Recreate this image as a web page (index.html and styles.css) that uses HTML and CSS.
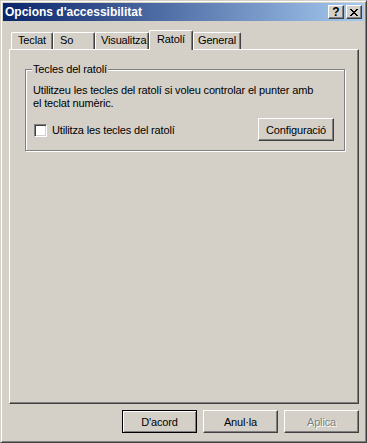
FILE: index.html
```html
<!DOCTYPE html>
<html>
<head>
<meta charset="utf-8">
<link rel="stylesheet" href="styles.css">
</head>
<body>
<div class="window">
  <div class="titlebar">
    <span class="title">Opcions d'accessibilitat</span>
    <div class="tb-buttons">
      <div class="tb-btn help">?</div>
      <div class="tb-btn close">
        <svg width="8" height="7" viewBox="0 0 8 7"><path fill="#000" d="M0 0h2v1H0z M6 0h2v1H6z M1 1h2v1H1z M5 1h2v1H5z M2 2h4v1H2z M3 3h2v1H3z M2 4h4v1H2z M1 5h2v1H1z M5 5h2v1H5z M0 6h2v1H0z M6 6h2v1H6z"/></svg>
      </div>
    </div>
  </div>
  <div class="client">
    <div class="tabs">
      <div class="tab t-teclat">Teclat</div>
      <div class="tab t-so">So</div>
      <div class="tab t-vis">Visualitza</div>
      <div class="tab t-rat selected">Ratolí</div>
      <div class="tab t-gen">General</div>
    </div>
    <div class="panel">
      <div class="group">
        <span class="group-label">Tecles del ratolí</span>
        <p class="desc">Utilitzeu les tecles del ratolí si voleu controlar el punter amb<br>el teclat numèric.</p>
        <div class="row">
          <label class="check"><span class="box"></span>Utilitza les tecles del ratolí</label>
          <div class="btn config">Configuració</div>
        </div>
      </div>
    </div>
    <div class="actions">
      <div class="btn default">D'acord</div>
      <div class="btn">Anul·la</div>
      <div class="btn disabled">Aplica</div>
    </div>
  </div>
</div>
</body>
</html>
```
FILE: styles.css
```css
* { box-sizing: border-box; }
html, body { margin: 0; padding: 0; }
body {
  width: 367px;
  height: 443px;
  font-family: "Liberation Sans", Arial, sans-serif;
  font-size: 11px;
  letter-spacing: -0.15px;
  color: #000;
  background: #D4D0C8;
}
.window {
  width: 367px;
  height: 443px;
  background: #D4D0C8;
  border: 1px solid;
  border-color: #D4D0C8 #404040 #404040 #D4D0C8;
  box-shadow: inset 1px 1px #fff, inset -1px -1px #808080;
  padding: 2px;
  display: flex;
  flex-direction: column;
}
.titlebar {
  height: 18px;
  background: linear-gradient(to right, #0A246A, #A6CAF0);
  display: flex;
  align-items: center;
  justify-content: space-between;
  padding: 0 2px 0 2px;
}
.title {
  color: #fff;
  font-weight: bold;
  font-size: 12px;
  letter-spacing: 0;
  line-height: 14px;
}
.tb-buttons {
  display: flex;
  gap: 2px;
}
.tb-btn {
  width: 16px;
  height: 14px;
  background: #D4D0C8;
  border: 1px solid;
  border-color: #fff #404040 #404040 #fff;
  box-shadow: inset -1px -1px #808080;
  display: flex;
  align-items: center;
  justify-content: center;
  font-weight: bold;
  font-size: 12px;
  line-height: 12px;
  letter-spacing: 0;
}
.tb-btn.help { padding-bottom: 1px; }
.tb-btn svg { display: block; margin-right: 1px; }
.client {
  flex: 1;
  display: flex;
  flex-direction: column;
  padding: 9px 5px 7px 6px;
}
.tabs {
  display: flex;
  align-items: flex-end;
  height: 19px;
  padding-left: 2px;
  position: relative;
  z-index: 1;
}
.tab {
  height: 17px;
  border-top: 1px solid #fff;
  border-left: 1px solid #fff;
  border-right: 1px solid #404040;
  border-radius: 2px 2px 0 0;
  box-shadow: inset -1px 0 #808080;
  padding: 1px 0 0 6px;
  line-height: 13px;
  background: #D4D0C8;
  white-space: nowrap;
}
.t-teclat { width: 42px; }
.t-so { width: 42px; }
.t-vis { width: 54px; padding-left: 5px; }
.t-rat { width: 44px; }
.t-gen { width: 48px; padding-left: 4px; }
.tab.selected {
  height: 20px;
  margin-bottom: -1px;
  padding-top: 2px;
  padding-left: 7px;
}
.panel {
  flex: 1;
  border: 1px solid;
  border-color: #fff #404040 #404040 #fff;
  box-shadow: inset -1px -1px #808080;
  padding: 19px 13px 0 15px;
}
.group {
  position: relative;
  border: 1px solid #808080;
  box-shadow: inset 1px 1px #fff, 1px 1px #fff;
  padding: 14px 10px 9px 7px;
}
.group-label {
  position: absolute;
  top: -7px;
  left: 6px;
  padding: 0 1px;
  background: #D4D0C8;
  line-height: 13px;
}
.desc {
  margin: 0;
  line-height: 13px;
}
.row {
  margin-top: 8px;
  display: flex;
  align-items: center;
  justify-content: space-between;
}
.check {
  display: flex;
  align-items: center;
  gap: 5px;
  margin-left: 1px;
  padding-top: 1px;
}
.box {
  width: 13px;
  height: 13px;
  background: #fff;
  border: 1px solid;
  border-color: #808080 #fff #fff #808080;
  box-shadow: inset 1px 1px #404040, inset -1px -1px #D4D0C8;
}
.btn {
  width: 75px;
  height: 23px;
  border: 1px solid;
  border-color: #fff #404040 #404040 #fff;
  box-shadow: inset -1px -1px #808080;
  display: flex;
  align-items: center;
  justify-content: center;
  background: #D4D0C8;
}
.btn.config { width: 76px; }
.btn.default {
  border-color: #000;
  box-shadow: inset 1px 1px #fff, inset -1px -1px #808080;
}
.btn.disabled {
  color: #808080;
  text-shadow: 1px 1px #fff;
}
.actions {
  margin-top: 6px;
  display: flex;
  justify-content: flex-end;
  gap: 6px;
}
```
